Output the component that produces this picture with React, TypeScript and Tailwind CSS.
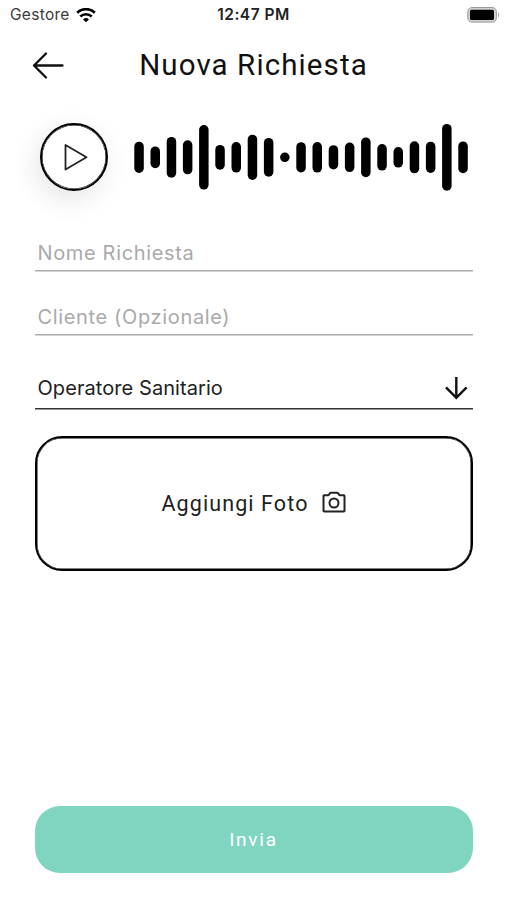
import { useState } from "react";

const WAVE = [31.3, 21.7, 40.7, 34, 64.5, 24.7, 30.5, 45.3, 38.7, 9.5, 30.3, 30.5, 24.3, 29.5, 39.7, 26.5, 20.5, 32, 31.3, 66.7, 31.7];
const WAVE_STEP = 16.2;

function StatusBar() {
  return (
    <div className="grid h-[30px] grid-cols-3 items-center text-[15.5px] leading-[30px]">
      <div className="flex items-center gap-[6px] pl-[10px]">
        <span className="tracking-[0.3px] text-[#3a3a3a]">Gestore</span>
        <svg className="h-[15px] w-5" viewBox="0 0 20 15" fill="none" stroke="#000">
          <path d="M1.2 4.800a12.6 12.6 0 0 1 17.6 0" strokeWidth="2.8" />
          <path d="M4.3 8.500a8.2 8.2 0 0 1 11.4 0" strokeWidth="2.6" />
          <path d="M10 14.3 7 11.4a4.3 4.3 0 0 1 6 0z" fill="#000" stroke="none" />
        </svg>
      </div>
      <span className="text-center font-semibold tracking-[0.5px] text-[#222]">12:47 PM</span>
      <div className="flex justify-end pr-[7px]">
        <svg className="h-[17px] w-[33px]" viewBox="0 0 33 17">
          <rect x="0.8" y="0.5" width="28.6" height="14.6" rx="4.2" fill="#d2d2d2" stroke="#999" strokeWidth="1" />
          <rect x="3" y="2.7" width="24" height="10.4" rx="1.5" fill="#000" />
          <path d="M31 5.500v5c1.5-.5 1.5-4.500 0-5z" fill="#aaa" />
        </svg>
      </div>
    </div>
  );
}

function Waveform() {
  return (
    <svg className="h-[68px] w-[334px]" viewBox="0 0 334 68">
      {WAVE.map((h, i) => (
        <rect key={i} x={0.3 + i * WAVE_STEP} y={34.3 - h / 2} width="9.5" height={h} rx="4.75" fill="#000" />
      ))}
    </svg>
  );
}

export default function App() {
  const [name, setName] = useState("");
  const [client, setClient] = useState("");

  return (
    <div className="flex h-[900px] w-[507px] flex-col bg-white font-['Inter',sans-serif]">
      <StatusBar />

      <header className="grid h-[70px] grid-cols-[108px_1fr_108px] items-center">
        <button type="button" aria-label="Indietro" className="pl-8">
          <svg className="h-7 w-8" viewBox="0 0 32 28" fill="none" stroke="#111" strokeWidth="2.3" strokeLinecap="round" strokeLinejoin="round">
            <path d="M30.500 14.500H2M14 2.500 2 14.500l12 12" />
          </svg>
        </button>
        <h1 className="text-center font-['Roboto',sans-serif] text-[29.5px] tracking-[1.1px] text-[#111]">Nuova Richiesta</h1>
      </header>

      <div className="mt-[23px] flex items-center gap-[26px] pl-10">
        <button
          type="button"
          aria-label="Riproduci"
          className="flex size-[68px] items-center justify-center rounded-full border-2 border-black bg-white shadow-[inset_0_0_0_0.5px_#000,-4px_8px_26px_2px_rgba(0,0,0,0.09)]"
        >
          <svg className="ml-1 h-7 w-6" viewBox="0 0 24 28" fill="none" stroke="#222" strokeWidth="1.8" strokeLinejoin="round">
            <path d="M1.500 2v24.500L22.500 14.200z" />
          </svg>
        </button>
        <Waveform />
      </div>

      <form className="flex flex-1 flex-col px-[34.5px]" onSubmit={(e) => e.preventDefault()}>
        <input
          value={name}
          onChange={(e) => setName(e.target.value)}
          placeholder="Nome Richiesta"
          className="mt-[44px] h-[36px] border-b border-[#aaa] pl-[3px] text-[20px] tracking-[0.65px] shadow-[0_0.5px_0_#aaa] outline-none placeholder:text-[#aaa]"
        />
        <input
          value={client}
          onChange={(e) => setClient(e.target.value)}
          placeholder="Cliente (Opzionale)"
          className="mt-[28px] h-[36px] border-b border-[#aaa] pl-[3px] text-[20px] tracking-[0.65px] shadow-[0_0.5px_0_#aaa] outline-none placeholder:text-[#aaa]"
        />
        <button
          type="button"
          className="mt-[32px] flex h-[42px] items-center justify-between border-b border-[#333] pr-[5px] pl-[3px] text-[20px] tracking-[0.07px] text-[#222] shadow-[0_0.5px_0_#333]"
        >
          <span>Operatore Sanitario</span>
          <svg className="h-6 w-6" viewBox="0 0 24 24" fill="none" stroke="#111" strokeWidth="2.4">
            <path d="M12.300 1v21M2 11.400 12.300 21.800l10.300-10.400" />
          </svg>
        </button>

        <button
          type="button"
          className="mt-[27px] flex h-[135px] items-center justify-center gap-[13px] rounded-[27px] border-2 border-black font-['Roboto',sans-serif] text-[21.5px] tracking-[1.1px] text-[#222] shadow-[inset_0_0_0_0.5px_#000]"
        >
          <span className="pt-px">Aggiungi Foto</span>
          <svg className="mb-[3px] h-[22px] w-6" viewBox="0 0 24 22" fill="none" stroke="#222" strokeWidth="2" strokeLinejoin="round">
            <path d="M2.200 4.200h4.300l2-2.500h7l2 2.500h4.300a.7.7 0 0 1 .7.7v14.900a.7.7 0 0 1-.7.7H2.200a.7.7 0 0 1-.7-.7V4.900a.7.7 0 0 1 .7-.7z" />
            <circle cx="12" cy="12" r="4.500" />
          </svg>
        </button>

        <button
          type="submit"
          className="mt-auto mb-[27px] h-[67px] rounded-[25px] bg-[#80d5c0] pt-[2px] font-['Roboto',sans-serif] text-[19px] font-normal tracking-[1.75px] text-white"
        >
          Invia
        </button>
      </form>
    </div>
  );
}
